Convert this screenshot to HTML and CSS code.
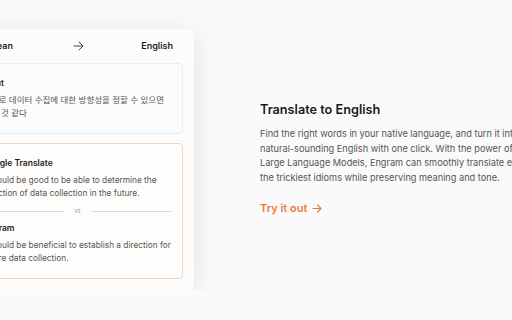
FILE: index.html
```html
<!DOCTYPE html>
<html lang="en">
<head>
  <meta charset="UTF-8">
  <meta name="viewport" content="width=device-width, initial-scale=1.0">
  <title>Translate to English</title>
  <link rel="stylesheet" href="styles.css">
</head>
<body>
  <div class="feature">
    <div class="demo-card">
      <div class="lang-bar">
        <span>Korean</span>
        <svg class="lang-arrow" width="11" height="10" viewBox="0 0 11 10" fill="none" stroke="#444" stroke-width="1" stroke-linecap="round" stroke-linejoin="round">
          <path d="M1 5h9M6 1l4 4-4 4"/>
        </svg>
        <span>English</span>
      </div>
      <div class="demo-body">
        <div class="result">
          <h3>Input</h3>
          <p class="ko" lang="ko">앞으로 데이터 수집에 대한 방향성을 정할 수 있으면 좋을 것 같다</p>
        </div>
        <div class="result compare">
          <h3>Google Translate</h3>
          <p>It would be good to be able to determine the direction of data collection in the future.</p>
          <div class="vs"><span>vs</span></div>
          <h3>Engram</h3>
          <p>It would be beneficial to establish a direction for future data collection.</p>
        </div>
      </div>
    </div>

    <div class="feature-text">
      <h2>Translate to English</h2>
      <p>Find the right words in your native language, and turn it into natural-sounding English with one click. With the power of Large Language Models, Engram can smoothly translate even the trickiest idioms while preserving meaning and tone.</p>
      <a class="try-link" href="#">Try it out
        <svg width="10" height="9" viewBox="0 0 10 9" fill="none" stroke="#ef7a3c" stroke-width="1.1" stroke-linecap="round" stroke-linejoin="round">
          <path d="M1 4.5h8M5.5 1l3.5 3.5L5.5 8"/>
        </svg>
      </a>
    </div>
  </div>
</body>
</html>
```

FILE: styles.css
```css
body {
  margin: 0;
  background: #fafafa;
  font-family: 'Inter', 'Noto Sans CJK KR', sans-serif;
  color: #1c1c1c;
  overflow: hidden;
}

.feature {
  display: flex;
  align-items: flex-start;
}

.demo-card {
  flex: 0 0 233px;
  margin: 29px 0 0 -39px;
  background: #fcfcfc;
  border-radius: 6px;
  box-shadow: 0 5px 26px rgba(0, 0, 0, 0.1);
}

.lang-bar {
  display: flex;
  justify-content: space-between;
  align-items: center;
  padding: 12px 21px;
  font-size: 9px;
  font-weight: 600;
  line-height: 10px;
}

.lang-bar .lang-arrow {
  margin-left: 2px;
}

.demo-body {
  padding: 0 11px 11px;
  display: flex;
  flex-direction: column;
  gap: 9px;
}

.result {
  border: 1px solid #ececec;
  border-radius: 4px;
  padding: 13px 10px;
}

.result.compare {
  border-color: #f7d3bf;
  background: #fffdfc;
}

.result h3 {
  margin: 0 0 5px;
  font-size: 8.5px;
  font-weight: 600;
  line-height: 12px;
}

.result p {
  margin: 0;
  font-size: 8.3px;
  line-height: 13px;
  color: #555;
}

.result p.ko {
  font-size: 8.5px;
  word-break: keep-all;
}

.vs {
  display: flex;
  align-items: center;
  gap: 10px;
  margin: 5px 0;
  height: 12px;
  font-size: 5.5px;
  color: #999;
}

.vs::before,
.vs::after {
  content: "";
  flex: 1;
  border-top: 1px solid #dcdcdc;
}

.feature-text {
  margin: 101px 0 0 66px;
  flex: 0 0 280px;
}

.feature-text h2 {
  margin: 0 0 8px;
  font-size: 12.7px;
  font-weight: 600;
  line-height: 18px;
  color: #1a1a1a;
}

.feature-text p {
  margin: 0 0 11px;
  font-size: 9.2px;
  line-height: 14.5px;
  color: #555;
}

.try-link {
  display: inline-flex;
  align-items: center;
  gap: 5px;
  font-size: 11px;
  font-weight: 600;
  color: #ef7a3c;
  text-decoration: none;
}
```
